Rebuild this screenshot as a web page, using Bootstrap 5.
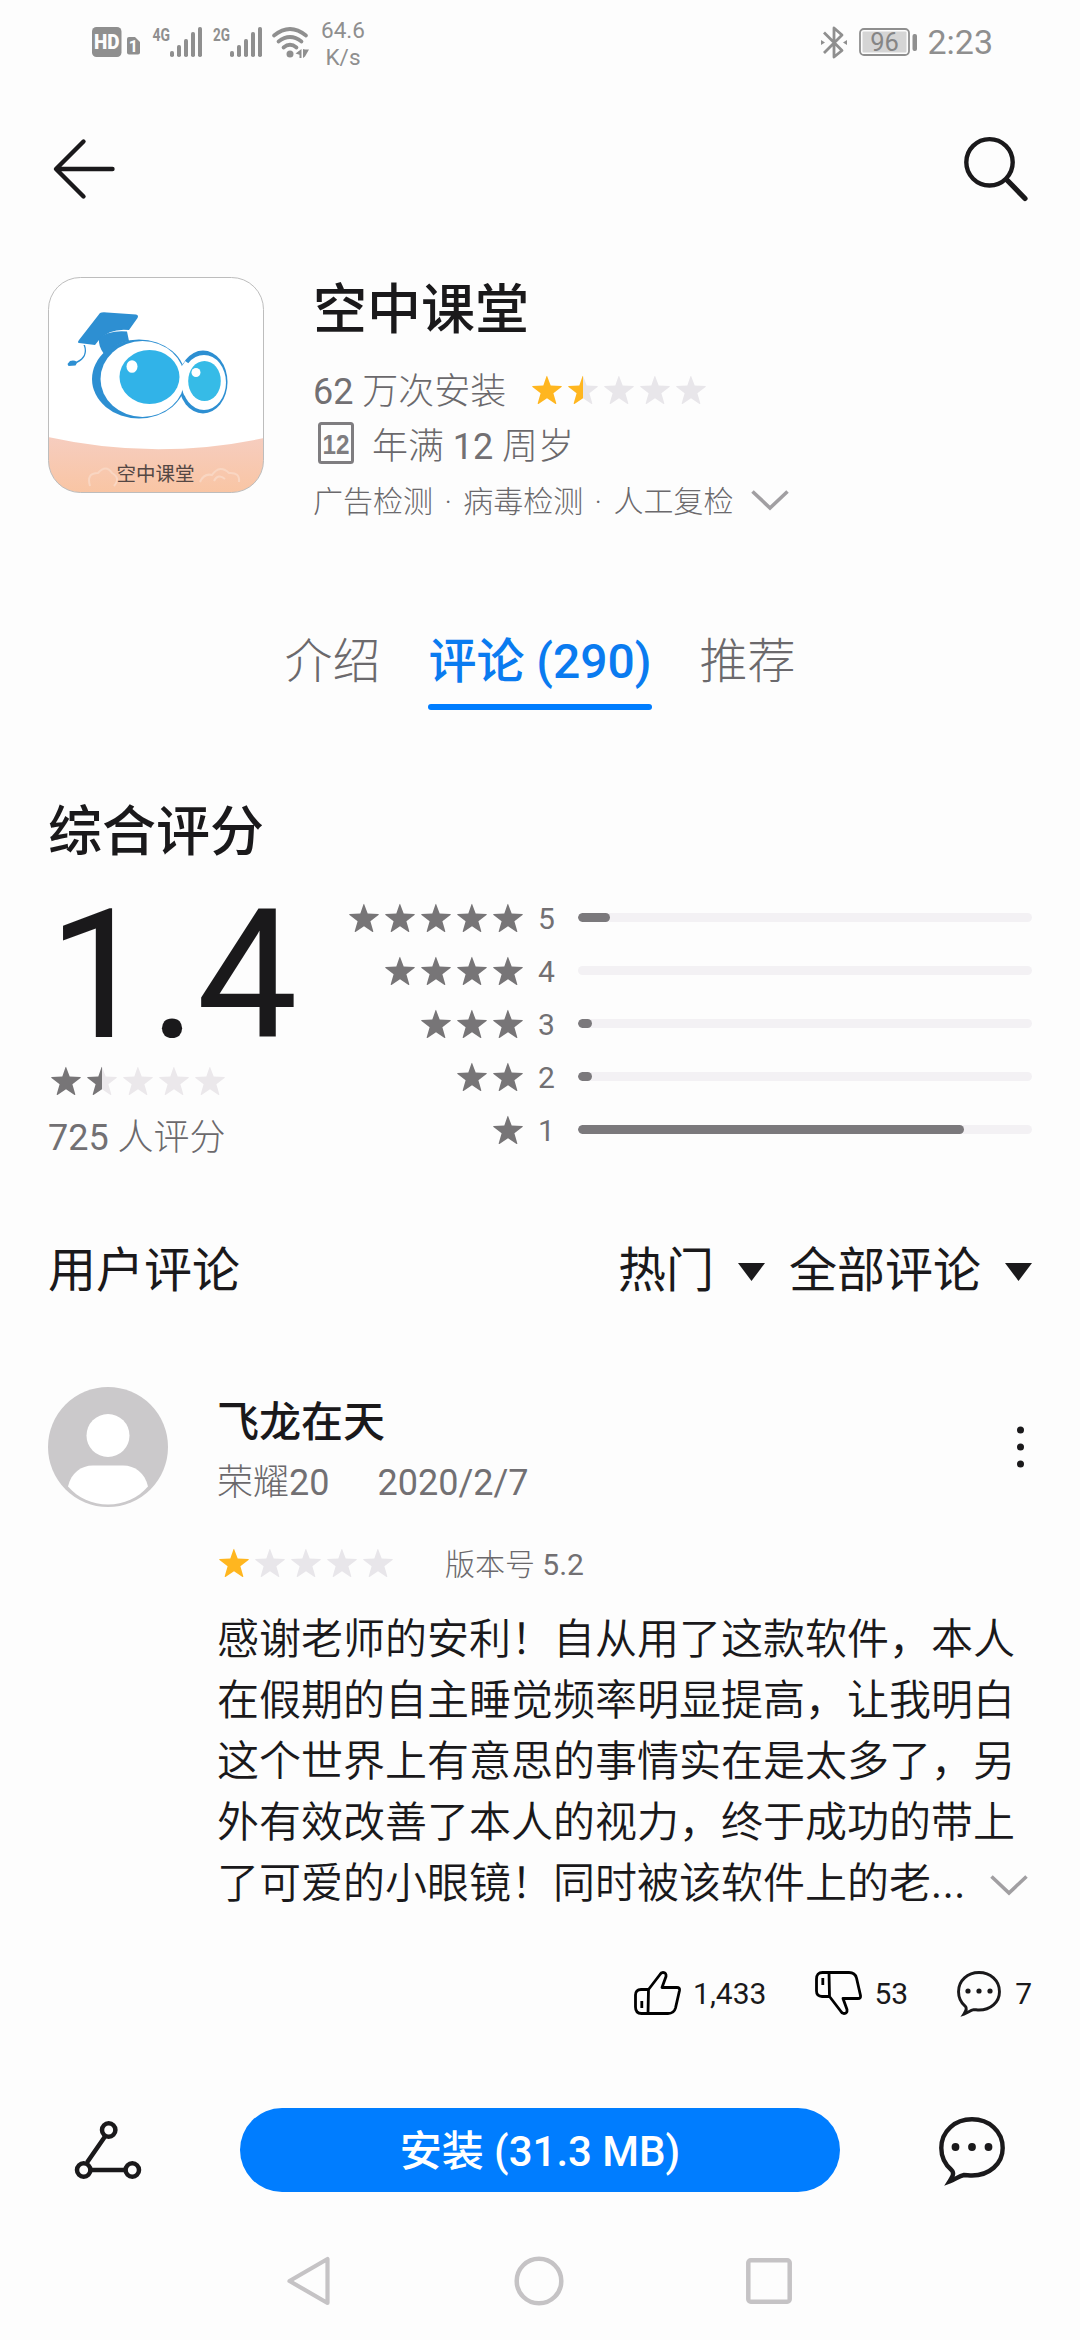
<!DOCTYPE html>
<html lang="zh-CN">
<head>
<meta charset="utf-8">
<meta name="viewport" content="width=device-width, initial-scale=1">
<title>空中课堂</title>
<link href="https://cdn.jsdelivr.net/npm/bootstrap@5.3.0/dist/css/bootstrap.min.css" rel="stylesheet">
<style>
  body { width:1080px; height:2340px; margin:0; overflow:hidden; background:#fdfdfd; color:#1a191b; font-family:Roboto,"Noto Sans CJK SC",sans-serif; font-weight:400; }
  svg { display:block; flex:none; overflow:visible; }
  .page-pad { padding-left:48px; padding-right:48px; }
  .soft { color:#6b696c; font-weight:300; }
  .num { font-weight:400; color:#727073; }
  .status { height:84px; padding:0 87px 0 92px; color:#8f8f8f; }
  .speed { font-size:22.5px; line-height:27px; width:44px; margin:4px 0 0 12px; font-weight:400; }
  .clock { font-size:34px; line-height:40px; margin-left:9px; }
  .topbar { height:170px; padding:0 51px 0 53px; }
  .app-head { padding-top:23px; height:277px; }
  .app-title { font-size:54px; line-height:62px; height:62px; padding-top:3px; font-weight:500; }
  .t36 { font-size:36px; }
  .t30 { font-size:30px; }
  .info-row { height:54px; line-height:54px; }
  .tab-strip { gap:48px; margin-top:107px; height:72px; font-size:48px; line-height:48px; }
  .tab-on { color:#0a7bf0; font-weight:500; }
  .tab-line { height:6px; border-radius:3px; background:#007dff; margin-top:18px; }
  .score-title { font-size:54px; line-height:60px; font-weight:500; margin-top:93px; }
  .score-area { margin-top:28px; height:274px; }
  .big-score { font-size:180px; line-height:164px; height:164px; padding-top:3px; }
  .bar-row { height:53px; }
  .bar-num { width:41px; font-size:30px; line-height:53px; padding:1px 0 0 15px; color:#727073; }
  .bar-row .progress { width:454px; height:9px; border-radius:5px; background:#f3f1f4; margin-left:14px; }
  .bar-row .progress-bar { background:#7b797c; border-radius:5px; }
  .reviews-head { margin-top:76px; height:60px; font-size:48px; line-height:60px; }
  .review { margin-top:86px; height:525px; }
  .review-main { margin-left:49px; padding-top:10px; width:815px; }
  .user-name { font-size:42px; line-height:52px; font-weight:500; }
  .user-meta { gap:48px; line-height:68px; height:68px; }
  .review-stars { margin-top:16px; height:60px; line-height:60px; gap:50px; }
  .review-text { margin-top:16px; font-size:42px; line-height:61px; font-weight:350; }
  .review-text > div { height:61px; white-space:nowrap; }
  .actions { margin-top:51px; height:60px; font-size:30px; }
  .install-bar { margin-top:85px; height:84px; padding:0 75px 0 75px; }
  .install-btn, .install-btn:hover { width:600px; height:84px; border-radius:42px; background:#007dff; color:#fff; font-size:42px; font-weight:500; line-height:84px; padding:2px 0 0; border:0; }
  .sysnav { height:148px; padding:0 288px 0 287px; margin-top:15px; }
</style>
</head>
<body>
<svg width="0" height="0" style="position:absolute">
  <defs>
    <linearGradient id="halfGold"><stop offset=".5" stop-color="#ffb61f"/><stop offset=".5" stop-color="#e8e6ea"/></linearGradient>
    <linearGradient id="halfGrey"><stop offset=".5" stop-color="#777577"/><stop offset=".5" stop-color="#ebe8eb"/></linearGradient>
    <path id="star" d="M15 .8 L18.7 10.6 L29.3 11.1 Q30.3 11.3 29.5 12 L21.4 18.2 L24.3 28.3 Q24.4 29.3 23.5 28.9 L15 23.2 L6.5 28.9 Q5.6 29.3 5.7 28.3 L8.6 18.2 L.5 12 Q-.3 11.3 .7 11.1 L11.3 10.6 L14.5 1.3 Q15 .3 15.5 1.3 Z"/>
    <g id="bars" fill="#8f8f8f"><rect x="0" y="24" width="4" height="6" rx="1.8"/><rect x="7" y="18" width="4" height="12" rx="1.8"/><rect x="14" y="12" width="4" height="18" rx="1.8"/><rect x="21" y="5" width="4" height="25" rx="1.8"/><rect x="28" y="0" width="4" height="30" rx="1.8"/></g>
    <g id="bubble" fill="none" stroke="#1a191b">
      <path stroke-width="4.4" stroke-linejoin="miter" d="M12.5 53 C6 47.500 2.300 40 2.300 31 C2.300 14 16 2.300 33 2.300 C50 2.300 63.700 14 63.700 31 C63.700 47 50 58.500 33 58.500 C30 58.500 27.500 58 25 58 C20 59 16 62.500 10.500 64.500 C14 59 15.500 56 12.500 53 Z"/>
      <g fill="#1a191b" stroke="none"><circle cx="16.500" cy="30" r="3.900"/><circle cx="33" cy="30" r="3.900"/><circle cx="49.500" cy="30" r="3.900"/></g>
    </g>
  </defs>
</svg>

<header class="status d-flex align-items-center justify-content-between">
  <div class="d-flex align-items-center">
    <svg width="49" height="30" viewBox="0 0 49 30"><rect width="29.500" height="30" rx="4.500" fill="#8f8f8f"/><text x="14.700" y="22" text-anchor="middle" font-family="Roboto" font-weight="900" font-size="19.500" textLength="25.500" lengthAdjust="spacingAndGlyphs" fill="#fdfdfd">HD</text><path d="M37 10h6l5 5v10.500q0 2-2 2H37q-2 0-2-2V12q0-2 2-2z" fill="#8f8f8f"/><text x="41.300" y="25" text-anchor="middle" font-family="Roboto" font-weight="700" font-size="16" fill="#fdfdfd">1</text></svg>
    <svg class="ms-2" width="54" height="30" viewBox="0 0 54 30"><text x="3.500" y="13.500" font-family="Roboto" font-weight="700" font-size="19" textLength="17.500" lengthAdjust="spacingAndGlyphs" fill="#8f8f8f">4G</text><use href="#bars" x="21"/></svg>
    <svg width="52" height="30" viewBox="0 0 52 30" class="ms-2"><text x="2" y="13.500" font-family="Roboto" font-weight="700" font-size="19" textLength="17" lengthAdjust="spacingAndGlyphs" fill="#8f8f8f">2G</text><use href="#bars" x="19"/></svg>
    <svg class="ms-2" width="38" height="31" viewBox="0 0 38 31" fill="none" stroke="#8f8f8f" stroke-width="3.700" stroke-linecap="round"><path d="M3 8.500Q19-4.500 35 8.500M7.500 14.500Q19 5.500 30.500 14.500M12.500 20.500Q19 15 25.500 20.500"/><circle cx="19" cy="27" r="3.500" fill="#8f8f8f" stroke="none"/><path d="M30.500 22v9h-2v-3.200L24.500 26.500zM32 22v9l2-1.500 4-7h-4z" fill="#8f8f8f" stroke="none"/></svg>
    <div class="speed text-center">64.6<br>K/s</div>
  </div>
  <div class="d-flex align-items-center">
    <svg width="26" height="33" viewBox="0 0 26 33" fill="none" stroke="#8f8f8f" stroke-width="2.800"><path d="M3 6.500 L21 24.500 L13 31 V2 L21 9 L3 27" stroke-linejoin="round"/><path d="M0 14v5l4-2.500zM26 14v5l-4-2.500z" fill="#8f8f8f" stroke="none"/></svg>
    <svg style="margin-left:12px" width="59" height="28" viewBox="0 0 59 28"><rect x="1" y="1" width="49" height="26" rx="4" fill="none" stroke="#8f8f8f" stroke-width="1.800"/><rect x="3.500" y="3.500" width="44" height="21" rx="1" fill="#d5d5d5"/><rect x="53.500" y="6" width="4.500" height="17" rx="2" fill="#8f8f8f"/><text x="25.500" y="22.500" text-anchor="middle" font-family="Roboto" font-size="25.500" fill="#858585">96</text></svg>
    <div class="clock">2:23</div>
  </div>
</header>

<nav class="topbar d-flex align-items-center justify-content-between">
  <svg width="62" height="62" viewBox="0 0 62 62" fill="none" stroke="#1a191b" stroke-width="4.400" stroke-linecap="round" stroke-linejoin="round"><path d="M30.500 3.500 L3 31 L30.500 58.500 M4 31 H59.500"/></svg>
  <svg width="66" height="66" viewBox="0 0 66 66" fill="none" stroke="#1a191b"><circle cx="26.500" cy="26.300" r="23.200" stroke-width="4.400"/><path d="M43.500 43.500 L62 62.500" stroke-width="5.200" stroke-linecap="round"/></svg>
</nav>

<section class="app-head page-pad d-flex">
  <svg width="216" height="216" viewBox="0 0 216 216">
    <defs>
      <clipPath id="iconClip"><rect x=".5" y=".5" width="215" height="215" rx="32"/></clipPath>
      <linearGradient id="peach" x1="0" y1="0" x2="0" y2="1"><stop offset="0" stop-color="#f6cdbf"/><stop offset="1" stop-color="#f9c5a3"/></linearGradient>
    </defs>
    <g clip-path="url(#iconClip)">
      <rect width="216" height="216" fill="#fff"/>
      <path d="M0 160 Q108 184 216 161 V216 H0Z" fill="url(#peach)"/>
      <g fill="none" stroke="#f9d6c2" stroke-width="2"><path d="M42 209q-4-13 8-13 8-9 14 0 9 5 2 13M152 205q4-9 12-7 8-11 17-2 11-1 10 9M166 204q4-8 11-2"/></g>
    </g>
    <rect x=".5" y=".5" width="215" height="215" rx="32" fill="none" stroke="#bdbdbd"/>
    <g fill="#2d8fd2">
      <path d="M52 36 Q54 35 59 35.500 L88 37.500 Q91 38 89.500 41 L81 53 Q62 51 51 63 L47 68 L31 66 Q29 65.500 31 63Z"/>
      <path d="M51 61 Q61 53 79 54.500 L81 64 Q68 66 56 77 Q50 69 51 61Z"/>
      <path d="M35.500 68 Q40 79 28.500 84.500 Q26 83 22 84 L19.500 87 L20.500 89 L27.500 88.500 L29 86 Q41 80 37 68Z"/>
      <ellipse cx="91" cy="102" rx="47" ry="39.500"/>
      <ellipse cx="155" cy="105" rx="24.500" ry="31.500"/>
    </g>
    <ellipse cx="94.500" cy="102" rx="42" ry="38" fill="#fff"/>
    <ellipse cx="156" cy="105.500" rx="22" ry="27.500" fill="#fff"/>
    <path d="M128 94 Q136 88 137 84 L143 88 V123 L136 118Z" fill="#fff"/>
    <ellipse cx="101.500" cy="100" rx="30" ry="27" fill="#31b3e8"/><ellipse cx="84" cy="89.500" rx="5.500" ry="6.300" fill="#fff"/>
    <ellipse cx="156.500" cy="104" rx="16.300" ry="20" fill="#36bbe7"/><circle cx="148" cy="95.500" r="4.500" fill="#fff"/>
    <text x="107.500" y="204" text-anchor="middle" font-family="Noto Sans CJK SC" font-size="19.500" fill="#544744">空中课堂</text>
  </svg>
  <div style="margin-left:49px">
    <div class="app-title">空中课堂</div>
    <div class="info-row soft t36 d-flex align-items-center mt-4"><span class="pt-1"><span class="num">62</span> 万次安装</span>
      <svg style="margin-left:26px" width="174" height="30" fill="#e8e6ea"><use href="#star" fill="#ffb61f"/><use href="#star" x="36" fill="url(#halfGold)"/><use href="#star" x="72"/><use href="#star" x="108"/><use href="#star" x="144"/></svg></div>
    <div class="info-row soft t36 d-flex align-items-center">
      <svg style="margin:0 18px 3px 5px" width="36" height="42" viewBox="0 0 36 42"><rect x="1.500" y="1.500" width="33" height="39" rx="2" fill="none" stroke="#7f7d80" stroke-width="3"/><text x="18" y="31.500" text-anchor="middle" font-family="Liberation Sans" font-weight="700" font-size="28" textLength="27" lengthAdjust="spacingAndGlyphs" fill="#7f7d80">12</text></svg>
      <span style="padding-top:5px">年满 <span class="num">12</span> 周岁</span></div>
    <div class="info-row soft t30 d-flex align-items-center"><span style="word-spacing:4.1px;padding-top:7px">广告检测 · 病毒检测 · 人工复检</span>
      <svg style="margin:3px 0 0 18px" width="38" height="20" viewBox="0 0 38 20" fill="none" stroke="#a19fa2" stroke-width="3.600"><path d="M1.500 1.500 L19 18 L36.500 1.500"/></svg></div>
  </div>
</section>

<nav class="tab-strip d-flex justify-content-center">
  <div class="soft">介绍</div>
  <div class="tab-on">评论 (290)<div class="tab-line"></div></div>
  <div class="soft">推荐</div>
</nav>

<section class="page-pad">
  <h2 class="score-title mb-0">综合评分</h2>
  <div class="score-area d-flex justify-content-between">
    <div>
      <div class="big-score">1.4</div>
      <div class="d-flex align-items-center" style="height:52px"><svg style="margin-left:3px" width="174" height="30" fill="#ebe8eb"><use href="#star" fill="#777577"/><use href="#star" x="36" fill="url(#halfGrey)"/><use href="#star" x="72"/><use href="#star" x="108"/><use href="#star" x="144"/></svg></div>
      <div class="soft t36" style="line-height:62px"><span class="num">725</span> 人评分</div>
    </div>
    <div>
      <div class="bar-row d-flex align-items-center justify-content-end"><svg width="174" height="30" fill="#777577"><use href="#star"/><use href="#star" x="36"/><use href="#star" x="72"/><use href="#star" x="108"/><use href="#star" x="144"/></svg><span class="bar-num">5</span><div class="progress"><div class="progress-bar" style="width:32px"></div></div></div>
      <div class="bar-row d-flex align-items-center justify-content-end"><svg width="138" height="30" fill="#777577"><use href="#star"/><use href="#star" x="36"/><use href="#star" x="72"/><use href="#star" x="108"/></svg><span class="bar-num">4</span><div class="progress"></div></div>
      <div class="bar-row d-flex align-items-center justify-content-end"><svg width="102" height="30" fill="#777577"><use href="#star"/><use href="#star" x="36"/><use href="#star" x="72"/></svg><span class="bar-num">3</span><div class="progress"><div class="progress-bar" style="width:14px"></div></div></div>
      <div class="bar-row d-flex align-items-center justify-content-end"><svg width="66" height="30" fill="#777577"><use href="#star"/><use href="#star" x="36"/></svg><span class="bar-num">2</span><div class="progress"><div class="progress-bar" style="width:14px"></div></div></div>
      <div class="bar-row d-flex align-items-center justify-content-end"><svg width="30" height="30" fill="#777577"><use href="#star"/></svg><span class="bar-num">1</span><div class="progress"><div class="progress-bar" style="width:386px"></div></div></div>
    </div>
  </div>
</section>

<section class="page-pad">
  <div class="reviews-head d-flex align-items-center">
    <span class="me-auto">用户评论</span>
    <span>热门</span>
    <svg style="margin:1px 24px 0 24px" width="27" height="18" viewBox="0 0 27 18" fill="#1a191b"><path d="M0 0H27L13.500 18Z"/></svg>
    <span>全部评论</span>
    <svg style="margin:1px 0 0 24px" width="27" height="18" viewBox="0 0 27 18" fill="#1a191b"><path d="M0 0H27L13.500 18Z"/></svg>
  </div>

  <article class="review d-flex">
    <svg width="120" height="120" viewBox="0 0 120 120"><circle cx="60" cy="60" r="60" fill="#cbc9cb"/><circle cx="60" cy="48.500" r="21.500" fill="#fff"/><path d="M20 99.500 C23 86 33 78.500 45 78.500 H75 C87 78.500 97 86 100 99.500 C90 111 76 117.500 60 117.500 C44 117.500 30 111 20 99.500Z" fill="#fff"/></svg>
    <div class="review-main">
      <div class="d-flex justify-content-between">
        <div>
          <div class="user-name">飞龙在天</div>
          <div class="user-meta soft t36 d-flex"><span>荣耀<span class="num">20</span></span><span class="num">2020/2/7</span></div>
        </div>
        <svg style="margin:29px 8.500px 0 0" width="7" height="42" viewBox="0 0 7 42" fill="#1a191b"><circle cx="3.500" cy="4" r="3.500"/><circle cx="3.500" cy="21" r="3.500"/><circle cx="3.500" cy="38" r="3.500"/></svg>
      </div>
      <div class="review-stars soft t30 d-flex align-items-center">
        <svg style="margin-left:2px" width="176" height="30" fill="#e8e6ea"><use href="#star" fill="#ffb61f"/><use href="#star" x="36"/><use href="#star" x="72"/><use href="#star" x="108"/><use href="#star" x="144"/></svg>
        <span class="pt-1">版本号 <span class="num">5.2</span></span>
      </div>
      <div class="review-text">
        <div>感谢老师的安利！自从用了这款软件，本人</div>
        <div>在假期的自主睡觉频率明显提高，让我明白</div>
        <div>这个世界上有意思的事情实在是太多了，另</div>
        <div>外有效改善了本人的视力，终于成功的带上</div>
        <div class="d-flex align-items-center justify-content-between"><span>了可爱的小眼镜！同时被该软件上的老<span class="fw-normal" style="letter-spacing:.6px">...</span></span><svg style="margin:3px 4px 0 0" width="38" height="20" viewBox="0 0 38 20" fill="none" stroke="#a19fa2" stroke-width="3.600"><path d="M1.500 1.500 L19 18 L36.500 1.500"/></svg></div>
      </div>
    </div>
  </article>

  <div class="actions d-flex align-items-center justify-content-end">
    <svg width="47" height="44" viewBox="0 0 47 44" fill="none" stroke="#000" stroke-width="2.800" stroke-linejoin="round"><path d="M14 42.500 H34 Q40 42.500 41.500 37 L45.500 19.500 Q46 16.500 43 16.500 H28 L32 5.500 Q32.500 1.500 29 1.500 Q27 1.500 26 3.500 L14.500 18.500 Z M14 18.500 H7 Q1.500 18.500 1.500 24 V36 Q1.500 42.500 7.500 42.500 H14"/><path d="M7.800 30v7"/></svg>
    <span style="margin:0 49px 0 12px">1,433</span>
    <svg width="47" height="44" viewBox="0 0 47 44" fill="none" stroke="#000" stroke-width="2.800" stroke-linejoin="round"><path d="M14 1.500 H34 Q40 1.500 41.500 7 L45.500 24.500 Q46 27.500 43 27.500 H28 L32 38.500 Q32.500 42.500 29 42.500 Q27 42.500 26 40.500 L14.500 25.500 Z M14 25.500 H7 Q1.500 25.500 1.500 20 V8 Q1.500 1.500 7.500 1.500 H14"/><path d="M7.800 7v7"/></svg>
    <span style="margin:0 49px 0 12px">53</span>
    <svg width="44" height="44" viewBox="0 0 66 66"><use href="#bubble"/></svg>
    <span style="margin-left:14px">7</span>
  </div>
</section>

<footer>
  <div class="install-bar d-flex align-items-center justify-content-between">
    <svg width="66" height="58" viewBox="0 0 66 58" fill="none" stroke="#1a191b" stroke-width="4.500"><path d="M12 41.500 L30 15.500 M15.500 49 H50"/><circle cx="33.700" cy="9" r="6.700"/><circle cx="8.700" cy="49" r="6.700"/><circle cx="57.300" cy="49" r="6.700"/></svg>
    <button type="button" class="btn install-btn">安装 (31.3 MB)</button>
    <svg width="66" height="66" viewBox="0 0 66 66"><use href="#bubble"/></svg>
  </div>
  <div class="sysnav d-flex align-items-center justify-content-between">
    <svg width="44" height="50" viewBox="0 0 44 50" fill="none" stroke="#c5c3c5" stroke-width="4.200" stroke-linejoin="round"><path d="M40.500 3 V47 L2.500 25Z"/></svg>
    <svg width="50" height="50" viewBox="0 0 50 50" fill="none" stroke="#c5c3c5" stroke-width="4.500"><circle cx="25" cy="25" r="22.300"/></svg>
    <svg width="46" height="46" viewBox="0 0 46 46" fill="none" stroke="#c5c3c5" stroke-width="4.500"><rect x="2.300" y="2.300" width="41.400" height="41.400" rx="2.500"/></svg>
  </div>
</footer>
<script src="https://cdn.jsdelivr.net/npm/bootstrap@5.3.0/dist/js/bootstrap.bundle.min.js"></script>
</body>
</html>
